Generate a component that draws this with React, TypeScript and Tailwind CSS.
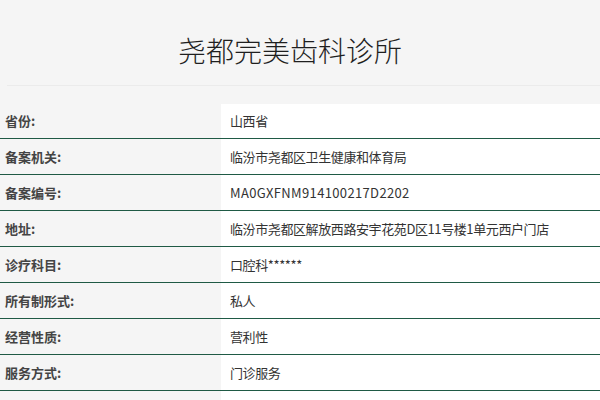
const ROWS: { label: string; value: string; latin?: boolean }[] = [
  { label: "省份:", value: "山西省" },
  { label: "备案机关:", value: "临汾市尧都区卫生健康和体育局" },
  { label: "备案编号:", value: "MA0GXFNM914100217D2202", latin: true },
  { label: "地址:", value: "临汾市尧都区解放西路安宇花苑D区11号楼1单元西户门店" },
  { label: "诊疗科目:", value: "口腔科******" },
  { label: "所有制形式:", value: "私人" },
  { label: "经营性质:", value: "营利性" },
  { label: "服务方式:", value: "门诊服务" },
  { label: "", value: "" },
];

export default function App() {
  return (
    <div
      className="h-[400px] w-[600px] overflow-hidden bg-[#f5f5f5] text-[#333]"
      style={{ fontFamily: '"Noto Sans CJK SC", "Noto Sans", sans-serif' }}
    >
      <div className="flex h-[85px] items-center justify-center pr-[20px] pt-[14px]">
        <h1 className="text-[28px] font-light leading-none text-[#1f1f1f]">尧都完美齿科诊所</h1>
      </div>
      <div className="ml-[7px] h-px bg-[#ebebeb]" />
      <div className="mt-[18px]">
        {ROWS.map((row, i) => (
          <div key={i} className="flex h-[36px] border-b border-[#1f5a45] first:h-[35px]">
            <div className="flex w-[221px] items-center pl-[5px] text-[13px] font-bold text-[#444]">
              {row.label}
            </div>
            <div
              className={
                row.latin
                  ? "flex flex-1 items-center bg-white pl-[9px] text-[13px] tracking-[0.35px] text-[#333]"
                  : "flex flex-1 items-center bg-white pl-[9px] text-[13px] tracking-[-0.4px] text-[#333]"
              }
            >
              {row.value}
            </div>
          </div>
        ))}
      </div>
    </div>
  );
}
